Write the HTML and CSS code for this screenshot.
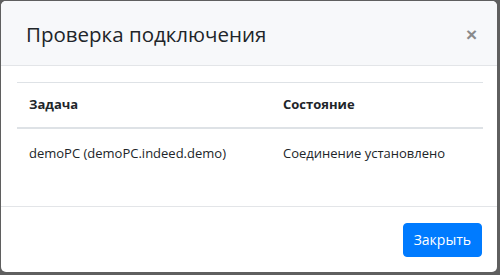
FILE: index.html
```html
<!DOCTYPE html>
<html lang="ru">
<head>
	<meta charset="utf-8" />
	<title>Проверка подключения</title>
	<link rel="stylesheet" href="styles.css">
</head>
<body>
	<div class="modal">
		<div class="modal-header">
			<h5 class="modal-title">Проверка подключения</h5>
			<button class="close" type="button">&times;</button>
		</div>
		<div class="modal-body">
			<table class="table">
				<thead>
					<tr>
						<th class="col-task">Задача</th>
						<th>Состояние</th>
					</tr>
				</thead>
				<tbody>
					<tr>
						<td>demoPC (demoPC.indeed.demo)</td>
						<td>Соединение установлено</td>
					</tr>
				</tbody>
			</table>
		</div>
		<div class="modal-footer">
			<button class="btn" type="button">Закрыть</button>
		</div>
	</div>
</body>
</html>
```

FILE: styles.css
```css
html, body {
	margin: 0;
	height: 100%;
	overflow: hidden;
}
body {
	background: #5f5f5f;
	font-family: "Open Sans", "Noto Sans", sans-serif;
	color: #212529;
	padding: 1px 3px 0 1px;
	box-sizing: border-box;
}
.modal {
	background: #fff;
	border-radius: 5px;
	overflow: hidden;
	height: 271px;
	display: flex;
	flex-direction: column;
}
.modal-header {
	display: flex;
	align-items: center;
	justify-content: space-between;
	height: 62px;
	padding: 2px 16px 0 25px;
	background: #f7f8fa;
	border-bottom: 1px solid #e3e5e8;
}
.modal-title {
	margin: 0;
	font-size: 20.5px;
	font-weight: 400;
}
.close {
	border: none;
	background: transparent;
	padding: 0 4px;
	font-size: 19px;
	font-weight: 700;
	color: #8a8a8a;
	line-height: 1;
	cursor: pointer;
	font-family: "Liberation Sans", sans-serif;
}
.modal-body {
	padding: 16px 14px 16px 16px;
	flex-grow: 1;
}
.table {
	width: 100%;
	border-collapse: collapse;
	font-size: 13px;
	line-height: 19px;
	margin-bottom: 16px;
}
.table th,
.table td {
	text-align: left;
	padding: 12px;
	border-top: 1px solid #dee2e6;
}
.table th {
	font-weight: 700;
	padding-bottom: 13px;
	border-bottom: 2px solid #dee2e6;
}
.table td {
	padding-top: 15px;
	padding-bottom: 9px;
}
.col-task {
	width: 230px;
}
.modal-footer {
	display: flex;
	justify-content: flex-end;
	padding: 16px 15px 15px;
	border-top: 1px solid #e3e5e8;
}
.btn {
	background: #007bff;
	color: #fff;
	border: 1px solid #007bff;
	border-radius: 4px;
	font-family: inherit;
	font-size: 14px;
	line-height: 20px;
	padding: 6px 10px;
	cursor: pointer;
}
```
